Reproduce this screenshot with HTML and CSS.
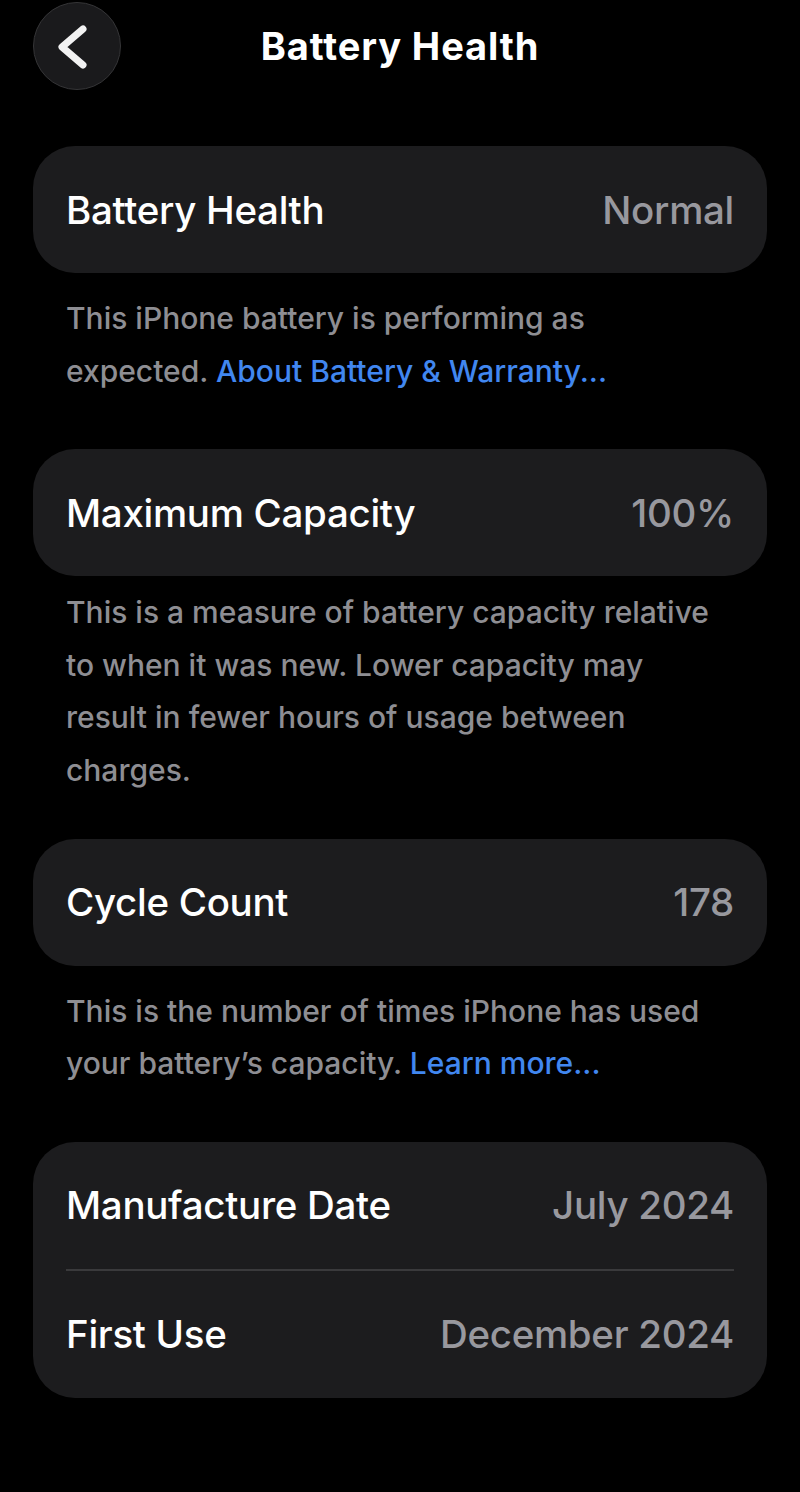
FILE: index.html
```html
<!DOCTYPE html>
<html lang="en">
<head>
<meta charset="utf-8">
<title>Battery Health</title>
<link rel="stylesheet" href="styles.css">
</head>
<body>
<header class="nav">
  <button class="back" aria-label="Back">
    <svg viewBox="0 0 88 88" width="88" height="88" aria-hidden="true">
      <path d="M50 27 L29 45 L50 63" fill="none" stroke="#f2f2f2" stroke-width="7" stroke-linecap="round" stroke-linejoin="round"/>
    </svg>
  </button>
  <h1 class="title">Battery Health</h1>
  <span class="nav-spacer"></span>
</header>

<main class="content">
  <section class="group">
    <div class="card">
      <div class="row"><span class="label">Battery Health</span><span class="value">Normal</span></div>
    </div>
    <p class="note">This iPhone battery is performing as expected. <a class="link" href="#">About Battery &amp; Warranty...</a></p>
  </section>

  <section class="group group-tight">
    <div class="card">
      <div class="row"><span class="label">Maximum Capacity</span><span class="value">100%</span></div>
    </div>
    <p class="note">This is a measure of battery capacity relative to when it was new. Lower capacity may result in fewer hours of usage between charges.</p>
  </section>

  <section class="group">
    <div class="card">
      <div class="row"><span class="label">Cycle Count</span><span class="value">178</span></div>
    </div>
    <p class="note">This is the number of times iPhone has used your battery’s capacity. <a class="link" href="#">Learn more...</a></p>
  </section>

  <section class="group">
    <div class="card">
      <div class="row"><span class="label">Manufacture Date</span><span class="value">July 2024</span></div>
      <div class="divider"></div>
      <div class="row"><span class="label">First Use</span><span class="value">December 2024</span></div>
    </div>
  </section>
</main>
</body>
</html>
```

FILE: styles.css
```css
* { box-sizing: border-box; }

html, body {
  margin: 0;
  padding: 0;
  background: #000;
}

body {
  font-family: Inter, "Noto Sans", "Liberation Sans", sans-serif;
  color: #fff;
  width: 800px;
  min-height: 1492px;
}

.nav {
  display: grid;
  grid-template-columns: 1fr auto 1fr;
  align-items: center;
  height: 91px;
  padding: 1px 33px 0;
}

.back {
  width: 88px;
  height: 88px;
  padding: 0;
  border-radius: 50%;
  background: #1a1a1c;
  border: 1px solid #353537;
  display: flex;
  align-items: center;
  justify-content: center;
  overflow: hidden;
}

.back svg { display: block; flex: none; }

.title {
  margin: 0;
  font-size: 38px;
  font-weight: 700;
  letter-spacing: 0.9px;
  text-align: center;
}

.content {
  padding: 55px 33px 0;
  display: flex;
  flex-direction: column;
}

.group + .group { margin-top: 52px; }
.group-tight + .group { margin-top: 42px; }

.card {
  background: #1c1c1e;
  border-radius: 42px;
  padding: 0 33px;
}

.row {
  height: 127px;
  display: flex;
  align-items: center;
  justify-content: space-between;
  font-size: 38.5px;
  font-weight: 500;
  letter-spacing: -0.3px;
}

.label { color: #fff; }
.value { color: #98989e; }

.divider {
  height: 2px;
  background: #3a3a3c;
}

.note {
  margin: 19px 47px 0 33px;
  font-size: 30px;
  font-weight: 500;
  line-height: 52.6px;
  color: #8e8e93;
}

.group-tight .note { margin-top: 10px; }

.link {
  color: #4187f0;
  text-decoration: none;
}
```
